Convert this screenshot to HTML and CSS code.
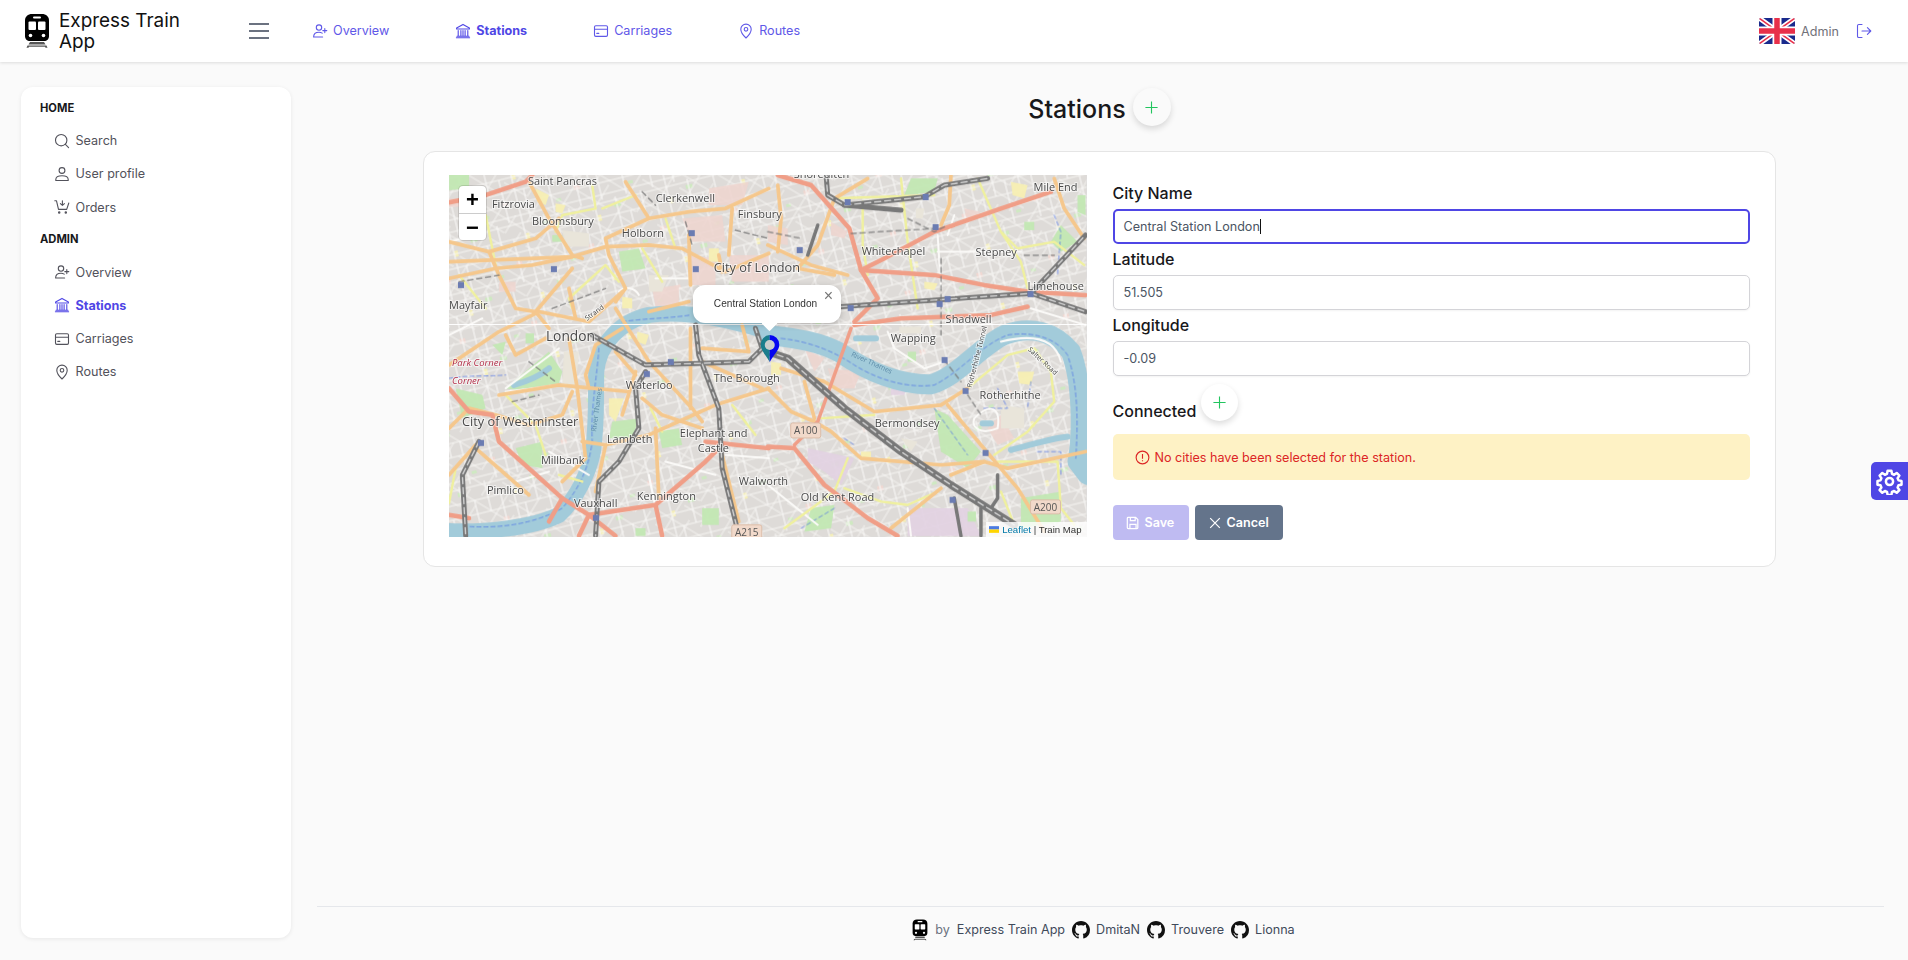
FILE: index.html
```html
<!DOCTYPE html>
<html lang="en">
<head>
<meta charset="utf-8">
<title>Express Train App</title>
<link rel="stylesheet" href="styles.css">
</head>
<body>
<svg class="sprite" aria-hidden="true">
  <symbol id="i-userplus" viewBox="0 0 16 16"><circle cx="7" cy="4.600" r="2.700"/><path d="M1.600 14c0-3 2.400-4.800 5.400-4.800 1.200 0 2.300.3 3.200.9M1.600 14h9M12.800 5.600v4M10.800 7.600h4"/></symbol>
  <symbol id="i-bank" viewBox="0 0 16 16"><path d="M8 1.400 14.400 5v1H1.600V5zM3.200 7.600v4.800M5.900 7.600v4.800M8 7.600v4.800M10.100 7.600v4.800M12.800 7.600v4.800M2 13.200h12M1.400 14.800h13.200"/></symbol>
  <symbol id="i-card" viewBox="0 0 16 16"><rect x="1.500" y="2.800" width="13" height="10.600" rx="1.300"/><path d="M1.500 6.200h13M3.800 10.400h2"/></symbol>
  <symbol id="i-pin" viewBox="0 0 16 16"><path d="M8 15S2.800 10.300 2.800 6.300a5.200 5.200 0 0 1 10.400 0C13.200 10.300 8 15 8 15z"/><circle cx="8" cy="6.300" r="1.800"/></symbol>
  <symbol id="i-search" viewBox="0 0 16 16"><circle cx="7.200" cy="7.200" r="5.700"/><path d="m11.400 11.400 3.200 3.200"/></symbol>
  <symbol id="i-user" viewBox="0 0 16 16"><circle cx="8" cy="4.500" r="2.900"/><path d="M1.800 14.500v-1c0-2.300 2.200-3.700 6.200-3.700s6.200 1.400 6.200 3.700v1z"/></symbol>
  <symbol id="i-cart" viewBox="0 0 16 16"><path d="M.8 1.800h1.700l2 8.600h8.200L14.800 4M8.400 1.800v4.400M6.400 4.600l2 1.800 2-1.800"/><circle cx="5.200" cy="13.400" r=".7"/><circle cx="11.800" cy="13.400" r=".7"/></symbol>
  <symbol id="i-github" viewBox="0 0 16 16"><path d="M8 0C3.580 0 0 3.580 0 8c0 3.540 2.290 6.530 5.470 7.590.4.07.55-.17.55-.38 0-.19-.01-.82-.01-1.490-2.010.37-2.530-.49-2.690-.94-.09-.23-.48-.94-.82-1.130-.28-.15-.68-.52-.01-.53.63-.01 1.080.58 1.230.82.72 1.210 1.870.87 2.330.66.07-.52.28-.87.51-1.070-1.780-.2-3.640-.89-3.640-3.950 0-.87.31-1.590.82-2.150-.08-.2-.36-1.020.08-2.120 0 0 .67-.21 2.200.82.64-.18 1.320-.27 2-.27.68 0 1.360.09 2 .27 1.530-1.040 2.200-.82 2.200-.82.44 1.100.16 1.920.08 2.120.51.56.82 1.270.82 2.150 0 3.070-1.870 3.750-3.650 3.950.29.25.54.73.54 1.480 0 1.070-.01 1.930-.01 2.200 0 .21.15.46.55.38A8.013 8.013 0 0 0 16 8c0-4.420-3.580-8-8-8z"/></symbol>
  <symbol id="i-train" viewBox="0 0 26 34"><path d="M8 0h10c4 0 7 2.500 7 6.500V22c0 3-2 5-5 5H6c-3 0-5-2-5-5V6.500C1 2.500 4 0 8 0z" fill="#000"/><rect x="9" y="2.500" width="8" height="2" rx="1" fill="#fff"/><rect x="4.500" y="7.500" width="7.500" height="8.500" rx="1" fill="#fff"/><rect x="14" y="7.500" width="7.500" height="8.500" rx="1" fill="#fff"/><circle cx="6.500" cy="21.500" r="1.800" fill="#fff"/><circle cx="19.500" cy="21.500" r="1.800" fill="#fff"/><path d="M6 28h14l1.500 2.500H4.500zM3.500 31.500h19l1 2.300h-2l-.5-1H5l-.5 1h-2z" fill="#555"/></symbol>
  <symbol id="i-plus" viewBox="0 0 16 16"><path d="M8 1.500v13M1.500 8h13"/></symbol>
</svg>

<header class="topbar">
  <div class="brand">
    <svg class="brand-icon"><use href="#i-train"/></svg>
    <span class="brand-name">Express Train App</span>
  </div>
  <button class="burger" aria-label="Menu"><span></span><span></span><span></span></button>
  <nav class="topnav">
    <a class="topnav-item"><svg class="ico"><use href="#i-userplus"/></svg>Overview</a>
    <a class="topnav-item is-active"><svg class="ico"><use href="#i-bank"/></svg>Stations</a>
    <a class="topnav-item"><svg class="ico"><use href="#i-card"/></svg>Carriages</a>
    <a class="topnav-item"><svg class="ico"><use href="#i-pin"/></svg>Routes</a>
  </nav>
  <div class="topbar-right">
    <svg class="flag" viewBox="0 0 36 26">
      <defs><clipPath id="flagclip"><rect width="36" height="26" rx="2"/></clipPath></defs>
      <g clip-path="url(#flagclip)">
        <rect width="36" height="26" fill="#1a2a8c"/>
        <path d="M0 0 36 26M36 0 0 26" stroke="#fff" stroke-width="5"/>
        <path d="M0 0 36 26M36 0 0 26" stroke="#e8304a" stroke-width="1.500"/>
        <path d="M18 0v26M0 13h36" stroke="#fff" stroke-width="9"/>
        <path d="M18 0v26M0 13h36" stroke="#e8304a" stroke-width="5.500"/>
      </g>
    </svg>
    <span class="user-name">Admin</span>
    <svg class="ico logout" viewBox="0 0 16 16"><path d="M6 1.500H2.800c-.7 0-1.300.6-1.300 1.300v10.400c0 .7.6 1.300 1.300 1.300H6M6 8h8.800M11.400 4.600 14.800 8l-3.400 3.400"/></svg>
  </div>
</header>

<div class="layout">
  <aside class="sidebar">
    <div class="side-title">HOME</div>
    <a class="side-item"><svg class="ico"><use href="#i-search"/></svg>Search</a>
    <a class="side-item"><svg class="ico"><use href="#i-user"/></svg>User profile</a>
    <a class="side-item"><svg class="ico"><use href="#i-cart"/></svg>Orders</a>
    <div class="side-title">ADMIN</div>
    <a class="side-item"><svg class="ico"><use href="#i-userplus"/></svg>Overview</a>
    <a class="side-item is-active"><svg class="ico"><use href="#i-bank"/></svg>Stations</a>
    <a class="side-item"><svg class="ico"><use href="#i-card"/></svg>Carriages</a>
    <a class="side-item"><svg class="ico"><use href="#i-pin"/></svg>Routes</a>
  </aside>

  <main class="content">
    <div class="page-head">
      <h1 class="page-title">Stations</h1>
      <button class="round-btn" aria-label="Add"><svg class="ico-plus"><use href="#i-plus"/></svg></button>
    </div>

    <section class="card">
      <div class="map">
        <svg class="map-svg" viewBox="0 0 638 362">
          <defs>
            <pattern id="streets" width="74" height="61" patternUnits="userSpaceOnUse" patternTransform="rotate(-14)">
              <rect width="74" height="61" fill="#dedbd8"/>
              <rect x="5" y="6" width="7" height="4" fill="#cfe9c2"/>
              <rect x="44" y="40" width="6" height="5" fill="#f0d8d2"/>
              <rect x="60" y="14" width="4" height="6" fill="#f5efb8"/>
              <rect x="24" y="49" width="5" height="3" fill="#cfe9c2"/>
              <path d="M0 3h74M0 17h30M22 17h52M0 31h74M0 44h44M30 44h44M0 56h74M8 0v31M20 17v44M34 0v31M47 17v44M60 0v61M69 31v30" stroke="#f8f7f5" stroke-width="1.200" fill="none"/>
            </pattern>
            <pattern id="streets2" width="51" height="43" patternUnits="userSpaceOnUse" patternTransform="rotate(31)">
              <path d="M0 8h51M0 21h26M15 33h36M11 0v43M27 0v21M40 12v31" stroke="#faf9f7" stroke-width="1" fill="none"/>
            </pattern>
          </defs>
          <g class="map-tiles">
            <rect width="638" height="362" fill="url(#streets)"/>
            <rect width="638" height="362" fill="url(#streets2)" opacity=".8"/>

            <g class="patch-pink">
              <g class="L">
                <polygon points="720,240 800,250 800,330 730,330"/><polygon points="840,240 960,240 960,320 850,320"/>
                <polygon points="0,70 30,70 30,95 0,95"/><polygon points="150,320 200,320 200,350 150,350"/>
                <polygon points="610,340 690,330 690,390 620,395"/><polygon points="780,40 900,20 880,90 780,90"/>
                <polygon points="700,130 820,120 830,200 730,200"/>
              </g>
              <g class="R">
                <polygon points="190,140 240,170 230,190 190,180"/><polygon points="590,100 640,110 600,140"/>
                <polygon points="700,720 740,790 690,810 660,760"/><polygon points="180,580 280,590 260,640 200,640"/>
                <polygon points="110,520 170,550 140,590"/><polygon points="0,150 60,160 60,210 0,200"/>
              </g>
            </g>
            <g class="patch-lav">
              <g class="R"><polygon points="120,820 260,850 220,930 170,890 120,860"/><polygon points="420,1000 600,1000 640,1083 420,1083"/><polygon points="370,630 420,630 410,660 370,660"/></g>
            </g>
            <g class="patch-green">
              <g class="L">
                <polygon points="0,0 60,0 60,40 0,45"/><polygon points="170,640 300,530 340,590 330,625 200,645"/>
                <polygon points="20,640 100,660 110,700 40,730"/><polygon points="510,230 570,220 590,280 520,290"/>
                <polygon points="230,475 255,475 255,505 230,505"/><polygon points="490,740 570,730 550,790 480,790"/>
                <polygon points="630,770 690,760 700,810 640,820"/><polygon points="200,820 280,800 280,880 220,870"/>
                <polygon points="310,180 340,180 340,200 310,200"/><polygon points="760,1000 810,1000 810,1050 760,1050"/>
                <polygon points="560,1060 590,1060 590,1083 560,1083"/><polygon points="130,510 170,500 160,540"/>
              </g>
              <g class="R">
                <polygon points="430,10 510,10 500,50 410,60"/><polygon points="880,150 930,200 880,230 850,200"/>
                <polygon points="500,700 540,720 640,830 600,880 520,830"/><polygon points="930,60 954,60 954,120 930,110"/>
                <polygon points="760,970 880,950 880,1040 760,1060"/><polygon points="130,1000 200,990 190,1060 110,1070"/>
                <polygon points="420,530 445,530 445,560 420,560"/><polygon points="770,140 800,140 800,165 770,165"/>
                <polygon points="600,1010 625,1010 625,1040 600,1040"/>
              </g>
            </g>
            <g class="patch-yellow">
              <g class="L">
                <polygon points="260,40 300,60 290,90 265,80"/><polygon points="480,670 525,670 500,740 480,720"/>
                <polygon points="520,365 550,370 550,400 520,400"/><polygon points="780,220 810,220 810,260 780,260"/>
                <polygon points="320,85 350,90 340,115 320,110"/><polygon points="565,470 600,480 590,510 565,500"/>
              </g>
              <g class="R">
                <polygon points="730,20 780,30 770,70 735,60"/><polygon points="470,320 510,325 500,345 470,340"/>
                <polygon points="10,560 40,565 40,600 10,600"/><polygon points="750,590 800,590 790,630 755,625"/>
                <polygon points="280,830 310,830 310,850 280,850"/>
              </g>
            </g>
            <g class="patch-beige">
              <g class="L"><polygon points="340,165 420,175 420,215 350,215"/><polygon points="600,300 660,300 640,350 600,350"/><polygon points="345,530 390,530 380,640 340,630"/></g>
              <g class="R"><polygon points="395,455 460,455 460,475 395,475"/><polygon points="700,690 770,700 770,760 700,760"/><polygon points="400,790 450,800 430,830"/><polygon points="445,100 470,100 465,130 445,130"/></g>
            </g>

            <g class="water">
              <g class="L">
                <path class="road w1" d="M-10 1068C90 1075 250 1060 330 1020 385 970 420 890 432 830 445 740 440 660 442 590 450 510 510 440 600 420 700 405 830 430 960 470"/>
                <path class="road w3" d="M195 630C230 620 270 605 300 580"/>
              </g>
              <g class="R">
                <path class="road w2" d="M0 480C90 490 160 500 220 535 300 590 400 630 490 628 570 605 630 520 710 480 790 450 860 470 910 530 945 620 945 780 930 860L960 900"/>
                <path class="road w3" d="M730 825C790 810 850 790 900 785M265 490H325"/>
                <path class="road w3" d="M645 745H670"/>
              </g>
            </g>
            <g class="bluedash">
              <g class="L">
                <path class="road" d="M450 520C445 600 425 700 430 800 420 870 400 930 340 1000 250 1050 150 1060 60 1055"/>
                <path class="road" d="M520 440C590 430 660 430 725 420"/>
                <path class="road" d="M0 610C60 600 120 605 170 600"/>
              </g>
              <g class="R">
                <path class="road" d="M40 490C130 500 200 530 260 570 340 620 430 640 500 630 580 590 640 510 720 480 780 470 860 480 900 540 935 640 930 760 925 850"/>
                <path class="road" d="M790 620 780 700M500 700 600 840M860 120 880 170 870 300M200 1000 100 1060M690 640 720 700 640 700M810 830H880V900"/>
                <path class="road" d="M230 790 260 810"/>
              </g>
            </g>
            <g class="white">
              <g class="L">
                <path class="road" d="M170 640 330 520M170 650 350 630M830 840 960 850M510 350C530 330 560 340 570 360M620 310H720"/>
                <path class="road" d="M0 480 100 430M0 200 90 180M420 900 300 830M650 860 800 900M600 900 620 1000M200 920 300 890"/>
              </g>
              <g class="R">
                <path class="road" d="M360 470 380 520 470 580 530 560M510 230H760M510 180 520 340M620 730C670 680 700 700 690 760 640 780 610 760 620 730"/>
                <path class="road" d="M700 500C780 480 860 480 880 560M790 400 954 450M0 930 150 1050M420 1000 430 1083M560 120 540 180"/>
              </g>
            </g>
            <g class="yellow">
              <g class="L">
                <path class="road" d="M110 120 140 270M30 300 110 400M430 30 440 100 340 120 320 170M370 400 360 370 470 270 510 320M170 660 260 750 290 840M650 130 680 220M580 220 640 320M850 690 920 780M605 700 640 770"/>
                <path class="road" d="M460 100 560 60M0 985 20 880M330 900 400 920"/>
              </g>
              <g class="R">
                <path class="road" d="M400 10 420 200 450 400M285 80 285 210 300 300M630 10 700 170 760 260 780 340M700 170 750 220 860 200 950 270M190 70 500 60M160 730 320 720M600 640 720 540 800 520 850 590 860 680 780 770 680 840M240 850 200 950 50 1060M230 940 340 980 420 990 510 950M690 860 870 860 880 1000 920 1050M700 950 740 1050"/>
              </g>
            </g>
            <g class="orange">
              <g class="L">
                <path class="road" d="M240 20 300 130 370 240 400 250"/>
                <path class="road" d="M0 260 370 245 470 215 600 210 700 220 830 290 960 235"/>
                <path class="road" d="M0 310 140 280 250 270 370 245"/>
                <path class="road" d="M530 20 600 130 470 190 480 240 530 340 500 380"/>
                <path class="road" d="M600 130 720 110 830 100 960 40"/>
                <path class="road" d="M120 230 150 300 200 400 260 410 300 460M260 410 370 280M360 340 380 430"/>
                <path class="road" d="M360 490 385 640 410 850 340 920"/>
                <path class="road" d="M0 570 150 470 270 410 420 440 520 350"/>
                <path class="road" d="M170 480 200 540 290 490"/>
                <path class="road" d="M500 400 600 560 730 700 760 740"/>
                <path class="road" d="M600 410 720 380"/>
                <path class="road" d="M720 180 725 330M725 460 725 700"/>
                <path class="road" d="M150 660 330 630 540 650"/>
                <path class="road" d="M420 640 410 600 440 510 520 460"/>
                <path class="road" d="M0 760 60 700 140 720 240 750 340 720 370 650"/>
                <path class="road" d="M400 800 470 810 600 780 800 690 960 640"/>
                <path class="road" d="M470 810 440 950"/>
                <path class="road" d="M620 760 630 970"/>
                <path class="road" d="M580 670 640 720 760 760"/>
                <path class="road" d="M0 900 80 810"/>
                <path class="road" d="M760 560 940 640M820 840 870 1040M760 520 900 530 880 450M500 530 560 600"/>
                <path class="road" d="M80 820 240 960M850 100 840 240M810 240 820 290M560 590 520 720"/>
                <path class="road" d="M0 200 120 230 260 190 330 130"/>
              </g>
              <g class="R">
                <path class="road" d="M300 10 200 70 150 210 90 280 200 300"/>
                <path class="road" d="M30 30 40 130 30 230"/>
                <path class="road" d="M550 0 545 90 520 150"/>
                <path class="road" d="M0 210 130 270 240 300"/>
                <path class="road" d="M860 10 890 100 950 190"/>
                <path class="road" d="M40 580 170 620 320 710 520 690 600 640"/>
                <path class="road" d="M540 690 640 810 750 940 830 1070"/>
                <path class="road" d="M0 640 70 710 140 740 190 770 280 850 520 870 650 860 720 880 954 830"/>
                <path class="road" d="M550 900 650 860M370 1060 520 940M110 620 140 730"/>
              </g>
            </g>
            <g class="salmon">
              <g class="L">
                <path class="road" d="M0 82 110 60 230 20 250 0"/>
                <path class="road" d="M0 640 60 710 130 720 150 800 340 970 420 1020 620 990 770 860 800 830"/>
                <path class="road" d="M770 800 960 820"/>
                <path class="road" d="M420 1020 390 1083M420 1020 500 1083M620 990 640 1083M0 1020 60 1030M300 1040 340 970"/>
              </g>
              <g class="R">
                <path class="road" d="M30 0 130 30 170 75 245 160 280 285 330 370 260 440"/>
                <path class="road" d="M280 285 350 250 500 170 700 100 850 50"/>
                <path class="road" d="M280 285 500 300 650 330 780 350 954 360"/>
                <path class="road" d="M260 450 400 430 670 420 780 395"/>
                <path class="road a100" d="M250 460 150 740 80 810"/>
                <path class="road" d="M0 815 80 820 170 930 300 1030 390 1083"/>
              </g>
            </g>
            <g class="rail">
              <g class="L">
                <path class="road" d="M430 480 590 570 750 565 900 560 940 520 920 460"/>
                <path class="road" d="M740 450 750 540 810 700 820 880 870 1080"/>
                <path class="road" d="M590 590 560 640 570 760 510 860 450 920 440 1083"/>
                <path class="road" d="M90 800 40 900 50 1083"/>
              </g>
              <g class="R">
                <path class="road" d="M175 0 180 60 230 90 470 65 530 30 660 10"/>
                <path class="road" d="M230 90 400 105"/>
                <path class="road" d="M220 395 500 375 790 355 954 410"/>
                <path class="road" d="M790 355 954 180"/>
                <path class="road narrow" d="M150 150 120 240"/>
                <path class="road narrow" d="M560 970 580 1083M690 900 690 970 670 1000M640 1000 640 1083"/>
                <path class="road wide" d="M0 530 60 550 230 700 400 830 550 930 740 1050"/>
              </g>
            </g>
            <g class="rail-light">
              <g class="L">
                <path class="road" d="M430 480 590 570 750 565 900 560 940 520 920 460"/>
                <path class="road" d="M740 450 750 540 810 700 820 880 870 1080"/>
                <path class="road" d="M590 590 560 640 570 760 510 860 450 920 440 1083"/>
                <path class="road" d="M90 800 40 900 50 1083"/>
              </g>
              <g class="R">
                <path class="road" d="M175 0 180 60 230 90 470 65 530 30 660 10"/>
                <path class="road" d="M220 395 500 375 790 355 954 410"/>
                <path class="road" d="M790 355 954 180"/>
                <path class="road" d="M0 530 60 550 230 700 400 830 550 930 740 1050"/>
              </g>
            </g>
            <g class="rail-thin">
              <g class="L"><path class="road" d="M860 165 960 190M30 320 150 300M310 400 470 340M710 140 730 210M580 50 620 90M240 560 320 620M190 680 270 660"/></g>
              <g class="R"><path class="road" d="M250 175 500 160M420 130 500 170 540 150M520 250V480M770 240H860M530 555 580 620M600 660 640 720M0 170 100 190"/></g>
            </g>
            <g class="stations">
              <rect x="102" y="91" width="6" height="6"/><rect x="9" y="107" width="6" height="6"/><rect x="240" y="55" width="6" height="6"/><rect x="244" y="91" width="6" height="6"/><rect x="219" y="184" width="6" height="6"/><rect x="195" y="196" width="6" height="6"/><rect x="29" y="265" width="6" height="6"/><rect x="144" y="340" width="6" height="6"/>
              <rect x="396" y="24" width="6" height="6"/><rect x="474" y="19" width="6" height="6"/><rect x="484" y="49" width="6" height="6"/><rect x="348" y="72" width="6" height="6"/><rect x="399" y="130" width="6" height="6"/><rect x="488" y="126" width="6" height="6"/><rect x="496" y="121" width="6" height="6"/><rect x="579" y="116" width="6" height="6"/><rect x="493" y="182" width="6" height="6"/><rect x="514" y="213" width="6" height="6"/><rect x="534" y="275" width="6" height="6"/><rect x="501" y="322" width="6" height="6"/>
            </g>
          </g>
          <path class="seam" d="M0 149.500h638"/>
          <g class="map-labels">
            <text x="79" y="10">Saint Pancras</text>
            <text x="345" y="3">Shoreditch</text>
            <text x="207" y="27">Clerkenwell</text>
            <text x="585" y="16">Mile End</text>
            <text x="43" y="33">Fitzrovia</text>
            <text x="289" y="43">Finsbury</text>
            <text x="83" y="50">Bloomsbury</text>
            <text x="173" y="62">Holborn</text>
            <text x="413" y="80">Whitechapel</text>
            <text x="527" y="81">Stepney</text>
            <text x="265" y="97" class="big">City of London</text>
            <text x="579" y="115">Limehouse</text>
            <text x="0" y="134">Mayfair</text>
            <text x="497" y="148">Shadwell</text>
            <text x="97" y="166" class="bigger">London</text>
            <text x="442" y="167">Wapping</text>
            <text x="265" y="207">The Borough</text>
            <text x="177" y="214">Waterloo</text>
            <text x="531" y="224">Rotherhithe</text>
            <text x="13" y="251" class="big">City of Westminster</text>
            <text x="158" y="268">Lambeth</text>
            <text x="426" y="252">Bermondsey</text>
            <text x="231" y="262">Elephant and</text>
            <text x="249" y="277">Castle</text>
            <text x="92" y="289">Millbank</text>
            <text x="290" y="310">Walworth</text>
            <text x="38" y="319">Pimlico</text>
            <text x="188" y="325">Kennington</text>
            <text x="352" y="326">Old Kent Road</text>
            <text x="125" y="332">Vauxhall</text>
            <text x="3" y="191" class="park">Park Corner</text>
            <text x="3" y="209" class="park">Corner</text>
            <text x="138" y="146" class="tiny" transform="rotate(-36 138 146)">Strand</text>
            <text x="402" y="181" class="tiny river-name" transform="rotate(24 402 181)">River Thames</text>
            <text x="147" y="257" class="tiny river-name" transform="rotate(-82 147 257)">River Thames</text>
            <text x="579" y="175" class="tiny" transform="rotate(43 579 175)">Salter Road</text>
            <text x="523" y="213" class="tiny" transform="rotate(-76 523 213)">Rotherhithe Tunnel</text>
          </g>
          <g class="shields">
            <rect x="342" y="248" width="30" height="15" rx="2"/><text x="357" y="259.500">A100</text>
            <rect x="283" y="350" width="30" height="15" rx="2"/><text x="298" y="361">A215</text>
            <rect x="582" y="325" width="30" height="14" rx="2"/><text x="597" y="336">A200</text>
          </g>
          <path d="M321 187C315 177 312 175 312 169.500a9.500 9.500 0 0 1 9-9.500z" fill="#1a7d8c"/>
          <path d="M321 187C327 177 330.500 175 330.500 169.500a9.500 9.500 0 0 0-9.500-9.500z" fill="#0505f0"/>
          <circle cx="321" cy="170" r="5" fill="#c8cccc"/>
        </svg>
        <div class="zoom-ctl">
          <button class="zoom-btn">+</button>
          <button class="zoom-btn">−</button>
        </div>
        <div class="popup">
          <span class="popup-text">Central Station London</span>
          <span class="popup-close">×</span>
          <span class="popup-tip"></span>
        </div>
        <div class="attrib"><svg class="attrib-flag" viewBox="0 0 12 8"><rect width="12" height="4" fill="#4c7be1"/><rect y="4" width="12" height="4" fill="#ffd500"/></svg><span><a class="attrib-link">Leaflet</a> | Train Map</span></div>
      </div>

      <form class="form">
        <div class="field">
          <label class="label">City Name</label>
          <div class="input is-focus">Central Station London<span class="caret"></span></div>
        </div>
        <div class="field">
          <label class="label">Latitude</label>
          <div class="input">51.505</div>
        </div>
        <div class="field">
          <label class="label">Longitude</label>
          <div class="input">-0.09</div>
        </div>
        <div class="connected">
          <span class="label label-connected">Connected</span>
          <button type="button" class="round-btn small" aria-label="Add"><svg class="ico-plus"><use href="#i-plus"/></svg></button>
        </div>
        <div class="alert">
          <svg class="alert-ico" viewBox="0 0 16 16"><circle cx="8" cy="8" r="6.800"/><path d="M8 4.200v5M8 11v.9"/></svg>
          <span>No cities have been selected for the station.</span>
        </div>
        <div class="actions">
          <button type="button" class="btn btn-save"><svg class="btn-ico" viewBox="0 0 16 16"><path d="M2.500 1.500h8.500l2.500 2.500v9.500c0 .6-.4 1-1 1h-10c-.6 0-1-.4-1-1v-11c0-.6.4-1 1-1z"/><path d="M5 1.500v3.800h5.500V1.500M4.500 14.500V9.500h7v5"/></svg>Save</button>
          <button type="button" class="btn btn-cancel"><svg class="btn-ico" viewBox="0 0 16 16"><path d="m2.500 2.500 11 11M13.500 2.500l-11 11"/></svg>Cancel</button>
        </div>
      </form>
    </section>

    <footer class="footer">
      <svg class="foot-train"><use href="#i-train"/></svg>
      <span class="foot-by">by</span>
      <span class="foot-name foot-app">Express Train App</span>
      <svg class="gh"><use href="#i-github"/></svg><span class="foot-name">DmitaN</span>
      <svg class="gh"><use href="#i-github"/></svg><span class="foot-name">Trouvere</span>
      <svg class="gh"><use href="#i-github"/></svg><span class="foot-name">Lionna</span>
    </footer>
  </main>
</div>

<button class="config-btn" aria-label="Settings">
  <svg viewBox="0 0 24 24"><path d="M10.300 2.500h3.400l.5 2.700 1.900.8 2.300-1.600 2.400 2.400-1.600 2.300.8 1.900 2.700.5v3.400l-2.700.5-.8 1.900 1.600 2.300-2.400 2.400-2.300-1.600-1.900.8-.5 2.700h-3.400l-.5-2.700-1.900-.8-2.300 1.600-2.400-2.400 1.600-2.300-.8-1.900-2.700-.5v-3.400l2.700-.5.8-1.900L3.200 6.800l2.400-2.400 2.300 1.600 1.900-.8z"/><circle cx="12" cy="12" r="3.200"/></svg>
</button>
</body>
</html>
```

FILE: styles.css
```css
* { box-sizing: border-box; }
html, body { margin: 0; height: 100%; }
body {
  display: flex;
  flex-direction: column;
  height: 100vh;
  overflow: hidden;
  background: #fafafa;
  color: #18181b;
  font-family: Inter, "Liberation Sans", sans-serif;
  font-size: 12.6px;
}
button { font-family: inherit; border: 0; padding: 0; cursor: pointer; }
.sprite { position: absolute; width: 0; height: 0; }
.ico { width: 16px; height: 16px; fill: none; stroke: currentColor; stroke-width: 1.100; flex: none; stroke-linecap: round; stroke-linejoin: round; }

/* Top bar */
.topbar {
  height: 62px;
  flex: none;
  display: flex;
  align-items: center;
  background: #fff;
  box-shadow: 0 1px 3px rgba(0,0,0,.12);
  position: relative;
}
.brand { display: flex; align-items: center; gap: 9px; padding-left: 24px; width: 249px; }
.brand-icon { width: 26px; height: 34px; flex: none; }
.brand-name { font-size: 18.900px; line-height: 21px; width: 130px; color: #111; }
.burger { width: 20px; height: 16px; background: none; display: flex; flex-direction: column; justify-content: space-between; }
.burger span { height: 2px; background: #6b7280; display: block; width: 100%; }
.topnav { display: flex; gap: 66px; margin-left: 43px; }
.topnav-item { display: flex; align-items: center; gap: 5px; color: #5f58e8; font-size: 12.600px; line-height: 20px; }
.topnav-item.is-active { font-weight: 700; color: #4f46e5; }
.topbar-right { margin-left: auto; display: flex; align-items: center; padding-right: 36px; }
.flag { width: 36px; height: 26px; }
.user-name { color: #71717a; font-size: 12.600px; margin-left: 6px; }
.logout { color: #5f58e8; margin-left: 17px; }

/* Layout */
.layout { flex: 1; display: flex; min-height: 0; }
.sidebar {
  width: 270px;
  flex: none;
  margin: 25px 26px 22px 21px;
  padding: 12px 19px;
  background: #fff;
  border-radius: 12px;
  box-shadow: 0 1px 4px rgba(0,0,0,.08);
}
.side-title { font-size: 11.200px; font-weight: 700; line-height: 18px; margin: 0 0 7px; color: #18181b; }
.side-item + .side-title { margin-top: 6.500px; }
.side-item { display: flex; align-items: center; gap: 5.500px; height: 33.300px; padding-left: 14px; color: #52525b; font-size: 12.600px; }
.side-item.is-active { color: #4f46e5; font-weight: 700; }

/* Main */
.content { flex: 1; min-width: 0; display: flex; flex-direction: column; align-items: center; padding-right: 24px; }
.page-head { display: flex; align-items: center; gap: 7px; margin: 27px 2px 0 0; height: 40px; }
.page-title { margin: 0; font-size: 25px; font-weight: 500; line-height: 40px; color: #18181b; }
.round-btn {
  width: 38px; height: 38px; border-radius: 50%;
  background: #fff;
  display: flex; align-items: center; justify-content: center;
  box-shadow: 0 3px 6px rgba(0,0,0,.14);
}
.page-head .round-btn { background: #fafafa; margin-top: -4px; }
.ico-plus { width: 15px; height: 15px; fill: none; stroke: #22c55e; stroke-width: 1.200; }

.card {
  width: 1353px;
  margin: 22px 2px 0 0;
  padding: 23px 25px 26px;
  background: #fff;
  border: 1px solid #e5e5e5;
  border-radius: 12px;
  display: grid;
  grid-template-columns: 1fr 1fr;
  gap: 26px;
}

/* Map */
.map { position: relative; height: 362px; overflow: hidden; background: #ddd; }
.map-svg { display: block; width: 100%; height: 100%; }
.map-tiles { filter: blur(.45px); }
.L { transform: scale(.33333); }
.R { transform: translate(319px, 0) scale(.33333); }
.road { fill: none; vector-effect: non-scaling-stroke; stroke-linecap: round; stroke-linejoin: round; }
.patch-pink polygon { fill: #efd5cf; opacity: .85; }
.patch-lav polygon { fill: #e2d1e2; opacity: .9; }
.patch-green polygon { fill: #c2e8b3; opacity: .95; }
.patch-yellow polygon { fill: #f7efb3; opacity: .95; }
.patch-beige polygon { fill: #e9e5da; }
.water { stroke: #a2cbda; }
.w1 { stroke-width: 16; }
.w2 { stroke-width: 20; }
.w3 { stroke-width: 6; }
.bluedash { stroke: #4f74e6; stroke-width: .9; stroke-dasharray: 4 3; opacity: .8; }
.white { stroke: #fbfaf8; stroke-width: 2; }
.salmon { stroke: #f09e87; stroke-width: 4.500; }
.a100 { stroke-width: 3.500; }
.orange { stroke: #f5c78c; stroke-width: 3.700; }
.yellow { stroke: #eff09e; stroke-width: 2.400; }
.rail { stroke: #787878; stroke-width: 5; }
.rail .wide { stroke-width: 7.500; }
.rail .narrow { stroke-width: 3.500; }
.rail-light { stroke: #d2d2d2; stroke-width: 1.400; stroke-dasharray: 6 4; }
.rail-thin { stroke: #777; stroke-width: 1.500; stroke-dasharray: 5 4; opacity: .75; }
.stations rect { fill: #6b7cb2; }
.seam { stroke: #fff; stroke-width: 1; opacity: .95; }
.map-labels text {
  font-family: "Open Sans", sans-serif;
  font-size: 11px;
  fill: #4a4a4a;
  stroke: rgba(255,255,255,.6);
  stroke-width: 2;
  paint-order: stroke;
}
.map-labels .big { font-size: 12.800px; }
.map-labels .bigger { font-size: 13.800px; }
.map-labels .park { font-size: 9.500px; font-style: italic; fill: #b3304a; }
.map-labels .tiny { font-size: 7px; }
.map-labels .river-name { fill: #5d8ba8; stroke: none; }
.shields rect { fill: #f1d9ca; stroke: #dcbda9; stroke-width: 1; }
.shields text { font-family: "Open Sans", sans-serif; font-size: 10px; fill: #555; text-anchor: middle; }

.zoom-ctl {
  position: absolute; left: 10px; top: 11px;
  width: 27px;
  display: flex; flex-direction: column;
  background: #fff;
  border-radius: 4px;
  box-shadow: 0 0 0 1px rgba(0,0,0,.12);
}
.zoom-btn {
  height: 27px; background: none;
  font-family: "Liberation Sans", sans-serif;
  font-size: 22px; font-weight: 700; line-height: 27px; color: #000;
}
.zoom-btn + .zoom-btn { border-top: 1px solid #ccc; }
.popup {
  position: absolute; left: 244px; top: 110px;
  width: 148px; height: 38px;
  background: #fff;
  border-radius: 12px;
  display: flex; align-items: center; justify-content: center;
  box-shadow: 0 2px 6px rgba(0,0,0,.2);
  padding-right: 3px;
}
.popup-text { font-family: "Liberation Sans", sans-serif; font-size: 10.100px; color: #333; padding-bottom: 1px; }
.popup-close { position: absolute; right: 8px; top: 2px; font-family: "Liberation Sans", sans-serif; font-size: 16px; line-height: 18px; color: #757575; }
.popup-tip {
  position: absolute; left: 71px; top: 33px;
  width: 11px; height: 11px;
  background: #fff;
  transform: rotate(45deg);
}
.attrib {
  position: absolute; right: 0; bottom: 0;
  height: 15px; padding: 0 5px 0 3px;
  display: flex; align-items: center; gap: 3px;
  background: rgba(255,255,255,.8);
  font-family: "Liberation Sans", sans-serif;
  font-size: 9.600px; color: #333;
  white-space: pre;
}
.attrib-flag { width: 10px; height: 7px; }
.attrib-link { color: #0078a8; }

/* Form */
.form { padding-top: 6px; display: flex; flex-direction: column; }
.field { display: flex; flex-direction: column; gap: 4px; margin-bottom: 3px; }
.label { font-size: 16px; font-weight: 450; line-height: 24px; color: #18181b; }
.label-connected { margin-bottom: -2px; }
.input {
  height: 35px;
  display: flex; align-items: center;
  padding: 0 10px;
  background: #fff;
  border: 1px solid #d4d4d8;
  border-radius: 5px;
  box-shadow: 0 1px 2px rgba(0,0,0,.05);
  font-size: 12.600px;
  color: #4b5563;
}
.input.is-focus { border: 2px solid #4f46e5; padding: 0 9px; box-shadow: none; }
.caret { width: 1px; height: 15px; background: #111; }
.connected { display: flex; align-items: flex-end; gap: 5px; margin-top: 5px; height: 37px; }
.round-btn.small { width: 37px; height: 37px; }
.alert {
  margin-top: 13px;
  height: 46px;
  display: flex; align-items: center; gap: 5px;
  padding: 0 22px;
  background: #fef2c5;
  border-radius: 5px;
  color: #dc2626;
  font-size: 12.600px;
}
.alert-ico { width: 15px; height: 15px; fill: none; stroke: currentColor; stroke-width: 1.200; }
.actions { display: flex; gap: 6px; margin-top: 25px; }
.btn {
  height: 35px;
  display: flex; align-items: center; gap: 5px;
  padding: 0 13px;
  border-radius: 4px;
  color: #fff;
  font-size: 12.600px; font-weight: 600;
}
.btn-ico { width: 14px; height: 14px; fill: none; stroke: currentColor; stroke-width: 1.400; }
.btn-save { background: #bfbbf2; width: 76px; }
.btn-cancel { background: #64748b; width: 88px; }

/* Footer */
.footer {
  margin-top: auto;
  width: 100%;
  height: 54px;
  flex: none;
  border-top: 1px solid #e5e7eb;
  display: flex; align-items: center; justify-content: center;
  padding: 0 0 8px 6px;
  font-size: 12.600px;
  color: #374151;
}
.foot-train { width: 16px; height: 22px; margin-right: 7px; }
.foot-by { color: #6b7280; margin-right: 7px; }
.gh { width: 18px; height: 18px; margin: 0 6px 0 7px; fill: #111; }
.foot-name { color: #3f4a5a; }

.config-btn {
  position: absolute; right: 0; top: 462px;
  width: 37px; height: 38px;
  background: #4f46e5;
  border-radius: 5px 0 0 5px;
  display: flex; align-items: center; justify-content: center;
}
.config-btn svg { width: 27px; height: 27px; fill: none; stroke: #fff; stroke-width: 2.200; stroke-linejoin: round; }
```
